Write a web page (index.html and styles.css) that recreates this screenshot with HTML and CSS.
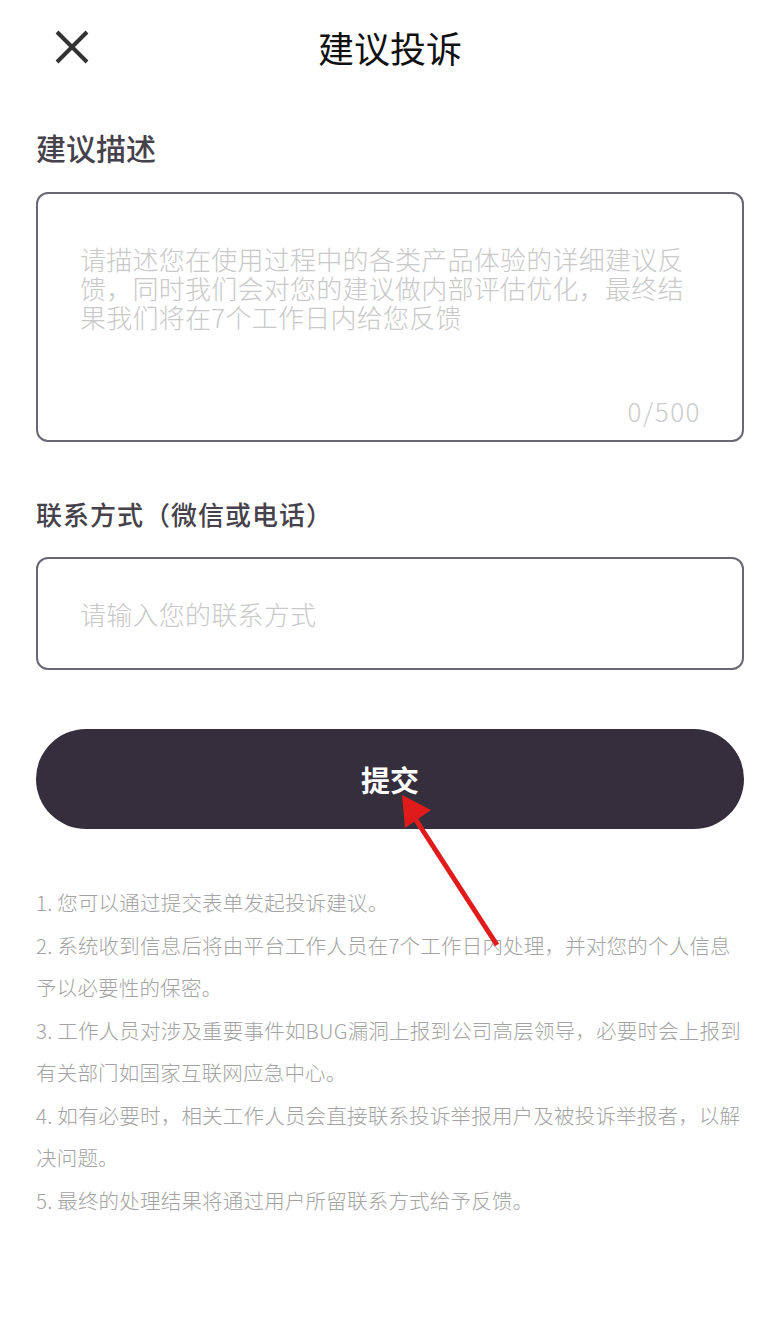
FILE: index.html
```html
<!DOCTYPE html>
<html lang="zh-CN">
<head>
<meta charset="utf-8">
<title>建议投诉</title>
<link rel="stylesheet" href="styles.css">
</head>
<body>
<div class="page">
  <header class="header">
    <div class="close">
      <svg width="36" height="36" viewBox="0 0 36 36"><path d="M3 3 L33 33 M33 3 L3 33" stroke="#333" stroke-width="4" stroke-linecap="butt" fill="none"/></svg>
    </div>
    <h1 class="title">建议投诉</h1>
    <div></div>
  </header>
  <main class="main">
    <div class="label label-lg">建议描述</div>
    <div class="textbox">
      <div class="placeholder">请描述您在使用过程中的各类产品体验的详细建议反馈，同时我们会对您的建议做内部评估优化，最终结果我们将在7个工作日内给您反馈</div>
      <div class="counter">0/500</div>
    </div>
    <div class="label label-md">联系方式（微信或电话）</div>
    <div class="inputbox">
      <div class="placeholder">请输入您的联系方式</div>
    </div>
    <button class="submit">提交</button>
    <div class="notes">
      <p>1. 您可以通过提交表单发起投诉建议。</p>
      <p>2. 系统收到信息后将由平台工作人员在7个工作日内处理，并对您的个人信息予以必要性的保密。</p>
      <p>3. 工作人员对涉及重要事件如BUG漏洞上报到公司高层领导，必要时会上报到有关部门如国家互联网应急中心。</p>
      <p>4. 如有必要时，相关工作人员会直接联系投诉举报用户及被投诉举报者，以解决问题。</p>
      <p>5. 最终的处理结果将通过用户所留联系方式给予反馈。</p>
    </div>
  </main>
  <svg class="arrow" width="780" height="1342" viewBox="0 0 780 1342">
    <line x1="497" y1="945" x2="416" y2="820" stroke="#e01b1b" stroke-width="5"/>
    <polygon points="402,795 431,810 405,828" fill="#e01b1b"/>
  </svg>
</div>
</body>
</html>
```

FILE: styles.css
```css
* { box-sizing: border-box; }
html, body { margin: 0; padding: 0; background: #ffffff; }
body {
  font-family: "Noto Sans CJK SC", "Noto Sans", sans-serif;
  width: 780px;
  height: 1342px;
  overflow: hidden;
}
.page { position: relative; width: 780px; height: 1342px; }
.header {
  height: 94px;
  display: grid;
  grid-template-columns: 1fr auto 1fr;
  align-items: center;
}
.close {
  padding-left: 54px;
  display: flex;
  align-items: center;
  height: 36px;
}
.close svg { display: block; }
.title {
  margin: 0;
  font-size: 36px;
  font-weight: 400;
  color: #111111;
  line-height: 50px;
}
.main { padding: 0 36px; }
.label {
  color: #46424c;
  font-weight: 500;
  line-height: 40px;
}
.label-lg { font-size: 30px; margin-top: 33px; }
.label-md { font-size: 26px; margin-top: 52px; letter-spacing: 1px; }
.textbox {
  margin-top: 25px;
  height: 250px;
  border: 2px solid #6a6772;
  border-radius: 12px;
  padding: 50px 42px 14px 42px;
  display: flex;
  flex-direction: column;
}
.placeholder {
  font-size: 26px;
  line-height: 29px;
  color: #c9c9c9;
  font-weight: 300;
  letter-spacing: 0.25px;
}
.counter {
  margin-top: auto;
  align-self: flex-end;
  font-size: 26px;
  line-height: 30px;
  color: #cccccc;
  font-weight: 300;
  letter-spacing: 1.5px;
  margin-right: -1px;
}
.inputbox {
  margin-top: 23px;
  height: 113px;
  border: 2px solid #6a6772;
  border-radius: 12px;
  padding: 0 42px;
  display: flex;
  align-items: center;
}
.submit {
  display: block;
  width: 100%;
  margin-top: 59px;
  height: 100px;
  border: none;
  border-radius: 50px;
  background: #352f3d;
  color: #ffffff;
  font-family: "Noto Sans CJK SC", sans-serif;
  font-size: 29px;
  font-weight: 700;
  padding: 0;
}
.notes {
  margin-top: 52px;
  color: #a3a3a3;
  font-size: 20.5px;
  line-height: 42.5px;
  font-weight: 300;
  letter-spacing: 0.2px;
}
.notes p { margin: 0; }
.arrow { position: absolute; left: 0; top: 0; pointer-events: none; }
```
